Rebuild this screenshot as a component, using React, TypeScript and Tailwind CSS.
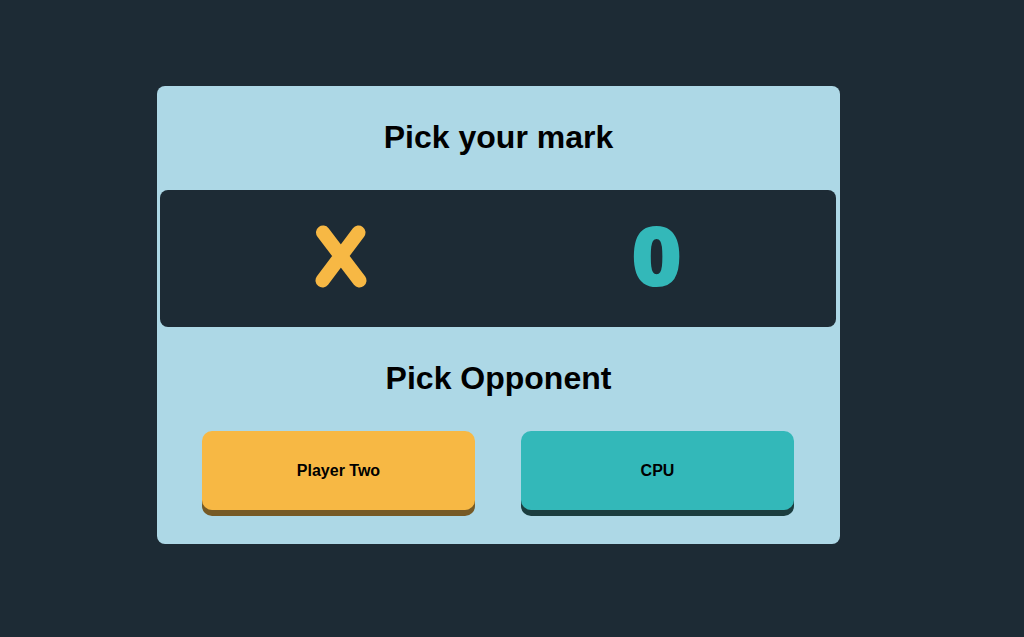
import React from 'react';

const XMark = () => (
  <svg width="52" height="63" viewBox="0 0 52 63" className="block">
    <path d="M8 7.5 L44.5 55.5 M43.5 7.5 L7.5 55.5" stroke="#f7b844" strokeWidth="14" strokeLinecap="round" fill="none" />
  </svg>
);

export default function App() {
  return (
    <div className="min-h-[637px] w-full bg-[#1d2b35] pt-[86px] pl-[157px]" style={{ fontFamily: '"Liberation Sans", Arial, sans-serif' }}>
      <div className="w-[683px] rounded-lg bg-[#add8e6] pt-[33px] pb-[34px] text-black">
        <h1 className="text-center text-[32px] leading-[37px] font-bold">Pick your mark</h1>

        <div className="ml-[3px] mt-[34px] flex h-[137px] w-[676px] items-center justify-center gap-[263px] rounded-lg bg-[#1d2b35]">
          <button className="flex w-[52px] items-center justify-center pb-[4px]">
            <XMark />
          </button>
          <button
            className="flex w-[52px] items-center justify-center pb-[10px] pl-[3px] text-[84px] leading-none font-extrabold text-[#33b8b9]"
            style={{ fontFamily: '"Open Sans", sans-serif' }}
          >
            <span className="inline-block scale-x-[1.05]">0</span>
          </button>
        </div>

        <h2 className="mt-[33px] text-center text-[32px] leading-[37px] font-bold">Pick Opponent</h2>

        <div className="mt-[34px] flex gap-[46px] pl-[45px] pr-[46px]">
          <button className="h-[79px] flex-1 rounded-[10px] bg-[#f7b844] text-base font-bold shadow-[0_6px_0_#765a26]">
            Player Two
          </button>
          <button className="h-[79px] flex-1 rounded-[10px] bg-[#33b8b9] text-base font-bold shadow-[0_6px_0_#1b3d3f]">
            CPU
          </button>
        </div>
      </div>
    </div>
  );
}
